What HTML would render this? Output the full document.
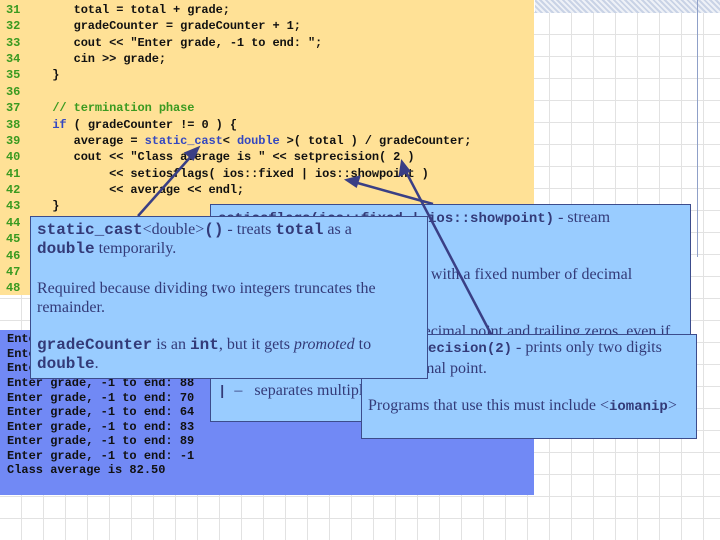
<!DOCTYPE html>
<html><head><meta charset="utf-8"><style>
body{margin:0;width:720px;height:540px;overflow:hidden;position:relative;background:#fff;
background-image:repeating-linear-gradient(90deg,transparent 0 21px,#e2e2e2 21px 22px),repeating-linear-gradient(0deg,transparent 0 21px,#e2e2e2 21px 22px);font-family:"Liberation Serif",serif}
.abs{position:absolute}
#hatch{left:535px;top:0;width:185px;height:13px;background:repeating-linear-gradient(45deg,#c9d3e6 0 2px,#eef1f7 2px 4px)}
#vline{left:697px;top:0;width:1px;height:257px;background:#8fa0c8}
#code{left:0;top:0;width:534px;height:295px;background:#ffe196}
.cl{position:absolute;left:0;font:bold 12px/16px "Liberation Mono",monospace;color:#111;white-space:pre;letter-spacing:-0.1px}
.cl b{color:#3a9a20;display:inline-block;width:31px;padding-left:6px;box-sizing:border-box;font-weight:bold}
.kw{color:#3448c0}.cm{color:#3a9a20}
#out{left:0;top:330px;width:534px;height:165px;background:#7189f5}
.ol{position:absolute;left:7px;font:bold 12px/14px "Liberation Mono",monospace;color:#111;white-space:pre}
.box{position:absolute;background:#99ccff;border:1px solid #3c4c8c;box-sizing:border-box;color:#333a78;font-size:16px;line-height:19px;overflow:hidden}
.box p{position:absolute;margin:0;white-space:nowrap}
.m{font:bold 14px "Liberation Mono",monospace;letter-spacing:0}
.M{font:bold 16px "Liberation Mono",monospace;letter-spacing:0}
</style></head><body>
<div class="abs" id="hatch"></div>
<div class="abs" id="vline"></div>
<div class="abs" id="code">
<div class="cl" style="top:2px"><b>31</b>      total = total + grade;</div>
<div class="cl" style="top:18px"><b>32</b>      gradeCounter = gradeCounter + 1;</div>
<div class="cl" style="top:35px"><b>33</b>      cout &lt;&lt; "Enter grade, -1 to end: ";</div>
<div class="cl" style="top:51px"><b>34</b>      cin &gt;&gt; grade;</div>
<div class="cl" style="top:67px"><b>35</b>   }</div>
<div class="cl" style="top:84px"><b>36</b></div>
<div class="cl" style="top:100px"><b>37</b>   <span class="cm">// termination phase</span></div>
<div class="cl" style="top:117px"><b>38</b>   <span class="kw">if</span> ( gradeCounter != 0 ) {</div>
<div class="cl" style="top:133px"><b>39</b>      average = <span class="kw">static_cast</span>&lt; <span class="kw">double</span> &gt;( total ) / gradeCounter;</div>
<div class="cl" style="top:149px"><b>40</b>      cout &lt;&lt; "Class average is " &lt;&lt; setprecision( 2 )</div>
<div class="cl" style="top:166px"><b>41</b>           &lt;&lt; setiosflags( ios::fixed | ios::showpoint )</div>
<div class="cl" style="top:182px"><b>42</b>           &lt;&lt; average &lt;&lt; endl;</div>
<div class="cl" style="top:198px"><b>43</b>   }</div>
<div class="cl" style="top:215px"><b>44</b></div>
<div class="cl" style="top:231px"><b>45</b></div>
<div class="cl" style="top:248px"><b>46</b></div>
<div class="cl" style="top:264px"><b>47</b></div>
<div class="cl" style="top:280px"><b>48</b></div>
</div>
<div class="abs" id="out">
<div class="ol" style="top:2px">Enter grade, -1 to end: 75</div>
<div class="ol" style="top:17px">Enter grade, -1 to end: 94</div>
<div class="ol" style="top:31px">Enter grade, -1 to end: 97</div>
<div class="ol" style="top:46px">Enter grade, -1 to end: 88</div>
<div class="ol" style="top:61px">Enter grade, -1 to end: 70</div>
<div class="ol" style="top:75px">Enter grade, -1 to end: 64</div>
<div class="ol" style="top:90px">Enter grade, -1 to end: 83</div>
<div class="ol" style="top:104px">Enter grade, -1 to end: 89</div>
<div class="ol" style="top:119px">Enter grade, -1 to end: -1</div>
<div class="ol" style="top:133px">Class average is 82.50</div>
</div>
<svg class="abs" style="left:0;top:0" width="720" height="540"><g stroke="#3a3f85" stroke-width="2.5" fill="#3a3f85">
<line x1="138" y1="216" x2="194" y2="153"/><polygon points="198,148 186,153 193,159"/>
<line x1="433" y1="204" x2="354" y2="182"/><polygon points="347,180 359,177 356,186"/>
</g></svg>
<div class="box" style="left:210px;top:204px;width:481px;height:218px">
<p style="left:7px;top:3px"><span class="m">setiosflags(ios::fixed | ios::showpoint)</span> - stream</p>
<p style="left:7px;top:22px">manipulator</p>
<p style="left:7px;top:60px"><span class="m">ios::fixed</span> - displays numbers with a fixed number of decimal</p>
<p style="left:7px;top:79px">places</p>
<p style="left:7px;top:117px"><span class="m">ios::showpoint</span> - forces the decimal point and trailing zeros, even if</p>
<p style="left:7px;top:176px"><span class="m">|</span> &nbsp;–&nbsp;&nbsp; separates multiple options</p>
</div>
<svg class="abs" style="left:0;top:0" width="720" height="540"><g stroke="#3a3f85" stroke-width="2.5" fill="#3a3f85"><line x1="492" y1="336" x2="404" y2="168"/><polygon points="402,162 400,175 409,171"/></g></svg>
<div class="box" style="left:361px;top:334px;width:336px;height:105px">
<p style="left:24px;top:3px"><span class="m">setprecision(2)</span> - prints only two digits</p>
<p style="left:-20px;top:24px">past the decimal point.</p>
<p style="left:6px;top:61px">Programs that use this must include &lt;<span class="m">iomanip</span>&gt;</p>
</div>
<div class="box" style="left:30px;top:216px;width:398px;height:163px">
<p style="left:6px;top:3px"><span class="M">static_cast</span>&lt;double&gt;<span class="M">()</span> - treats <span class="M">total</span> as a</p>
<p style="left:6px;top:22px"><span class="M">double</span> temporarily.</p>
<p style="left:6px;top:62px">Required because dividing two integers truncates the</p>
<p style="left:6px;top:81px">remainder.</p>
<p style="left:6px;top:118px"><span class="M">gradeCounter</span> is an <span class="M">int</span>, but it gets <i>promoted</i> to</p>
<p style="left:6px;top:137px"><span class="M">double</span>.</p>
</div>
</body></html>
